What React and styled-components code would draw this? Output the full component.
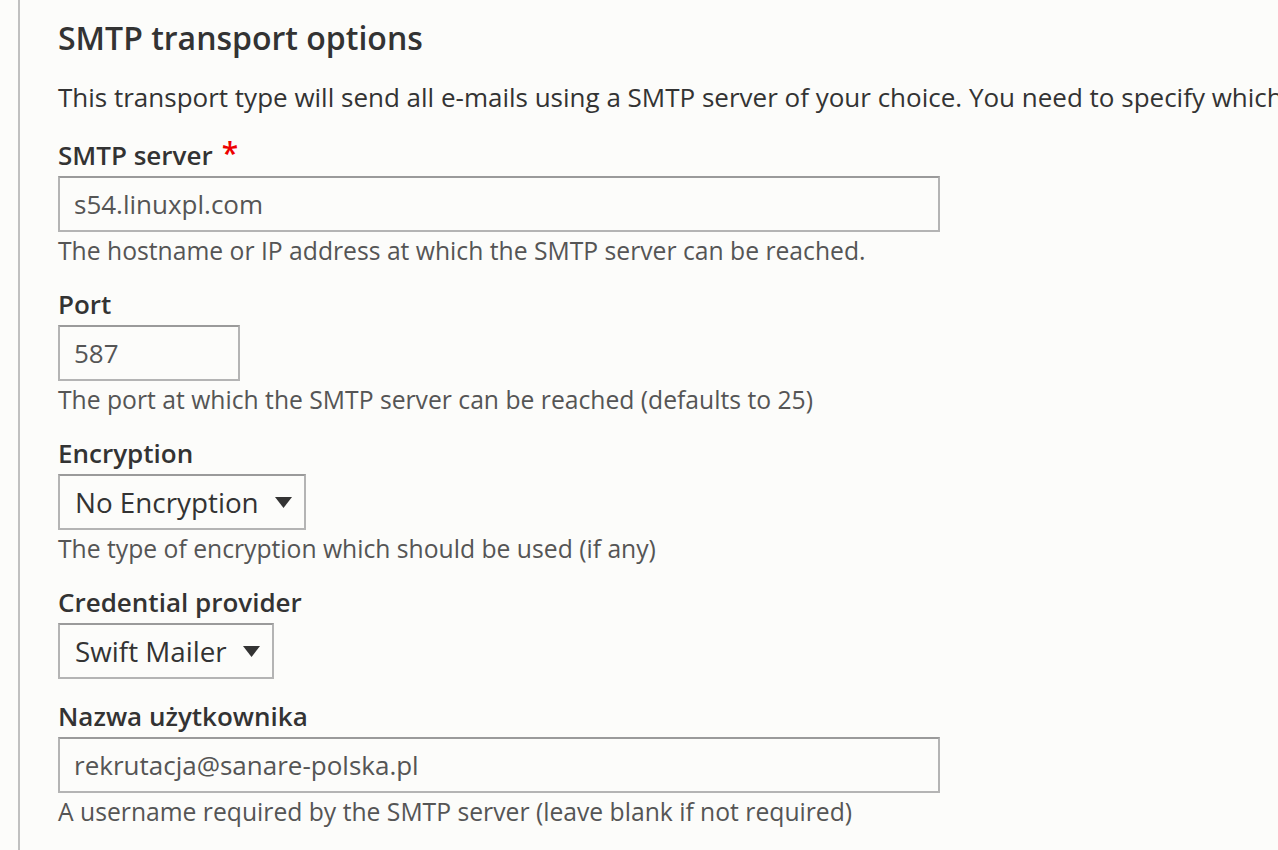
import React from 'react';
import styled, { createGlobalStyle } from 'styled-components';

const GlobalStyle = createGlobalStyle`
  html, body {
    margin: 0;
    padding: 0;
    background: #fcfcfa;
  }
  body {
    font-family: "Open Sans", "Noto Sans", sans-serif;
    color: #333;
  }
`;

const fields = [
  {
    label: 'SMTP server',
    required: true,
    type: 'text',
    value: 's54.linuxpl.com',
    width: 882,
    desc: 'The hostname or IP address at which the SMTP server can be reached.',
  },
  {
    label: 'Port',
    type: 'text',
    value: '587',
    width: 182,
    desc: 'The port at which the SMTP server can be reached (defaults to 25)',
  },
  {
    label: 'Encryption',
    type: 'select',
    value: 'No Encryption',
    desc: 'The type of encryption which should be used (if any)',
  },
  {
    label: 'Credential provider',
    type: 'select',
    value: 'Swift Mailer',
  },
  {
    label: 'Nazwa użytkownika',
    type: 'text',
    value: 'rekrutacja@sanare-polska.pl',
    width: 882,
    desc: 'A username required by the SMTP server (leave blank if not required)',
  },
];

const App = () => {
  return (
    <>
      <GlobalStyle />
      <Page>
        <Fieldset>
          <Title>SMTP transport options</Title>
          <Intro>
            This transport type will send all e-mails using a SMTP server of your choice. You need to specify which
          </Intro>
          {fields.map((f) => (
            <FormItem key={f.label} $hasDesc={!!f.desc}>
              <Label>
                {f.label}
                {f.required && <Required>*</Required>}
              </Label>
              {f.type === 'select' ? (
                <Select>
                  <span>{f.value}</span>
                  <svg width="17" height="11" viewBox="0 0 17 11">
                    <path d="M0 0 H17 L8.5 11 Z" fill="#333" />
                  </svg>
                </Select>
              ) : (
                <Input $width={f.width}>{f.value}</Input>
              )}
              {f.desc && <Description>{f.desc}</Description>}
            </FormItem>
          ))}
        </Fieldset>
      </Page>
    </>
  );
};

export default App;

const Page = styled.div`
  width: 1278px;
  height: 850px;
  overflow: hidden;
  padding-left: 18px;
  box-sizing: border-box;
`;

const Fieldset = styled.div`
  height: 100%;
  border-left: 2px solid #c0c0c0;
  padding: 18px 0 0 38px;
  white-space: nowrap;
  overflow: hidden;
`;

const Title = styled.h2`
  margin: 0;
  font-size: 32px;
  line-height: 40px;
  font-weight: 600;
  color: #333;
`;

const Intro = styled.p`
  margin: 20px 0 24px;
  font-size: 26px;
  line-height: 38px;
  color: #333;
`;

const FormItem = styled.div`
  margin-bottom: ${(p) => (p.$hasDesc ? 20 : 22)}px;
`;

const Label = styled.div`
  font-size: 26px;
  line-height: 30px;
  font-weight: 600;
  color: #333;
  margin-bottom: 6px;
`;

const Required = styled.span`
  color: #e00;
  font-size: 30px;
  margin-left: 9px;
  vertical-align: top;
  line-height: 26px;
`;

const Input = styled.div`
  box-sizing: border-box;
  width: ${(p) => p.$width}px;
  height: 56px;
  border: 2px solid #b4b4b4;
  border-top-color: #9a9a9a;
  padding: 0 14px;
  display: flex;
  align-items: center;
  font-size: 26px;
  color: #555;
`;

const Select = styled.div`
  box-sizing: border-box;
  display: inline-flex;
  align-items: center;
  gap: 16px;
  height: 56px;
  border: 2px solid #b4b4b4;
  border-top-color: #9a9a9a;
  padding: 0 12px 0 15px;
  font-size: 27.8px;
  color: #333;
`;

const Description = styled.div`
  margin-top: 1px;
  font-size: 24.7px;
  line-height: 36px;
  color: #555;
`;
